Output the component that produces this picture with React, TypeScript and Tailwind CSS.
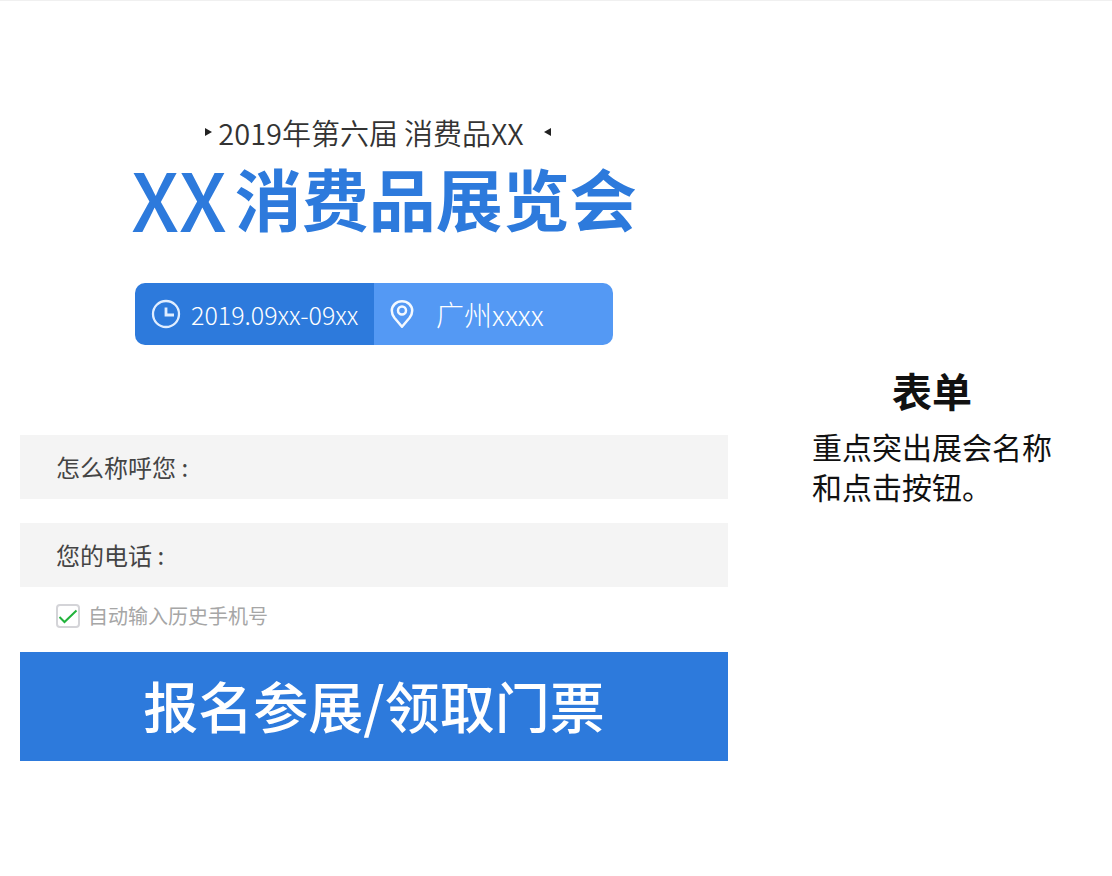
import React from "react";

function Triangle({ flip = false }: { flip?: boolean }) {
  return (
    <svg width="7" height="8" viewBox="0 0 7 8" className="shrink-0" aria-hidden="true">
      <path d={flip ? "M7 0v8L0 4z" : "M0 0v8l7-4z"} fill="#222222" />
    </svg>
  );
}

function ClockIcon() {
  return (
    <svg width="30" height="30" viewBox="0 0 30 30" fill="none" stroke="#e0edff" className="shrink-0" aria-hidden="true">
      <circle cx="15" cy="15" r="13" strokeWidth="2.3" />
      <path d="M15 8.5V16h8" strokeWidth="2.8" />
    </svg>
  );
}

function PinIcon() {
  return (
    <svg width="24" height="30" viewBox="0 0 24 30" fill="none" stroke="#f4f9ff" className="shrink-0" aria-hidden="true">
      <path
        d="M12 2.2C6.3 2.2 1.8 6.4 1.8 11.8c0 2.6 1 4.8 2.6 7L12 27.8l7.6-9c1.6-2.2 2.6-4.4 2.6-7C22.2 6.4 17.7 2.2 12 2.2z"
        strokeWidth="2.5"
        strokeLinejoin="round"
      />
      <circle cx="12" cy="11.5" r="4" strokeWidth="2.5" />
    </svg>
  );
}

function Field({ id, label, type }: { id: string; label: string; type: string }) {
  return (
    <div className="flex h-16 items-center gap-3 bg-[#f4f4f4] px-9">
      <label htmlFor={id} className="shrink-0 text-2xl text-[#444444]">
        {label} :
      </label>
      <input id={id} type={type} className="h-full min-w-0 flex-1 bg-transparent text-2xl text-[#444444] outline-none" />
    </div>
  );
}

export default function App() {
  return (
    <div className="min-h-screen border-t border-[#f0f0f0] bg-white font-['Noto_Sans_CJK_SC',sans-serif]">
      <div className="grid grid-cols-[708fr_300fr] gap-x-[84px] pl-5">
        <main className="min-w-0 pt-[111px]">
          <header className="flex flex-col items-center">
            <p className="flex items-center gap-1.5 pl-2 text-[29px] leading-10 font-[350] whitespace-nowrap text-[#333333]">
              <Triangle />
              <span className="flex gap-1.5">
                <span>2019年第六届</span>
                <span>消费品XX</span>
              </span>
              <span className="flex pl-3.5">
                <Triangle flip />
              </span>
            </p>
            <h1 className="flex items-center gap-2 pl-5 text-[67px] leading-[90px] font-bold whitespace-nowrap text-[#2d7adc]">
              <span className="text-[80px] font-medium">XX</span>
              <span>消费品展览会</span>
            </h1>
            <div className="mt-[41px] grid w-full max-w-[478px] grid-cols-2 overflow-hidden rounded-[10px] text-[25px] leading-[62px] font-light whitespace-nowrap text-white">
              <div className="flex items-center gap-2.5 bg-[#2d7adc] pl-4">
                <ClockIcon />
                <time>2019.09xx-09xx</time>
              </div>
              <div className="flex items-center gap-[22px] bg-[#5499f4] pl-4">
                <PinIcon />
                <span className="text-[28px]">广州xxxx</span>
              </div>
            </div>
          </header>

          <form className="mt-[90px]" onSubmit={(e) => e.preventDefault()}>
            <div className="flex flex-col gap-6">
              <Field id="name" label="怎么称呼您" type="text" />
              <Field id="phone" label="您的电话" type="tel" />
            </div>
            <div className="flex h-[65px] items-center gap-2 px-9 pb-2">
              <span className="grid h-6 w-6 shrink-0">
                <input
                  id="history"
                  type="checkbox"
                  defaultChecked
                  className="peer col-start-1 row-start-1 h-6 w-6 appearance-none rounded border-2 border-[#d4d4d8] bg-white"
                />
                <svg
                  viewBox="0 0 24 24"
                  fill="none"
                  className="pointer-events-none invisible col-start-1 row-start-1 h-6 w-6 peer-checked:visible"
                  aria-hidden="true"
                >
                  <path d="M3.5 13l5 5L20.5 6.5" stroke="#22b33c" strokeWidth="2" />
                </svg>
              </span>
              <label htmlFor="history" className="text-xl text-[#a6a6a6]">
                自动输入历史手机号
              </label>
            </div>
            <button type="submit" className="w-full bg-[#2d7adc] pb-1 text-[55px] leading-[105px] font-medium whitespace-nowrap text-white">
              报名参展/领取门票
            </button>
          </form>
        </main>

        <aside className="pt-[365px] text-[#111111]">
          <div className="w-60">
            <h2 className="text-center text-[40px] leading-[48px] font-bold">表单</h2>
            <p className="mt-3 text-3xl leading-10">重点突出展会名称和点击按钮。</p>
          </div>
        </aside>
      </div>
    </div>
  );
}
